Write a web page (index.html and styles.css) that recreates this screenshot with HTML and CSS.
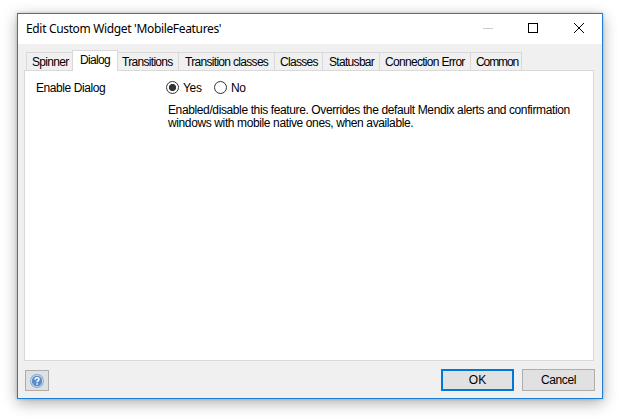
FILE: index.html
```
<!DOCTYPE html>
<html lang="en">
<head>
<meta charset="utf-8">
<title>Edit Custom Widget</title>
<link rel="stylesheet" href="styles.css">
</head>
<body>
<div class="window">
  <header class="titlebar">
    <h1 class="title">Edit Custom Widget 'MobileFeatures'</h1>
    <svg class="controls" width="103" height="12" viewBox="0 0 103 12" fill="none" shape-rendering="crispEdges">
      <path d="M1 6.500h10" stroke="#ccc"/>
      <rect x="46.500" y="1.500" width="9" height="9" stroke="#000"/>
      <path d="M92 1l10 10M102 1l-10 10" stroke="#000" shape-rendering="auto"/>
    </svg>
  </header>
  <nav class="tabs">
    <div class="tab spinner"><span>Spinner</span></div>
    <div class="tab active"><span>Dialog</span></div>
    <div class="tab transitions"><span>Transitions</span></div>
    <div class="tab transition-classes"><span>Transition classes</span></div>
    <div class="tab classes"><span>Classes</span></div>
    <div class="tab statusbar"><span>Statusbar</span></div>
    <div class="tab connection"><span>Connection Error</span></div>
    <div class="tab common"><span>Common</span></div>
  </nav>
  <main class="panel">
    <div class="label"><span>Enable Dialog</span></div>
    <div class="field">
      <div class="options">
        <i class="radio checked"></i><span class="yes">Yes</span>
        <i class="radio"></i><span class="no">No</span>
      </div>
      <p class="help"><span class="line-one">Enabled/disable this feature. Overrides the default Mendix alerts and confirmation</span><br><span class="line-two">windows with mobile native ones, when available.</span></p>
    </div>
  </main>
  <footer class="footer">
    <div class="help-button">
      <svg width="14" height="14" viewBox="0 0 14 14">
        <circle cx="7" cy="7" r="6.900" fill="#86a9d6"/>
        <circle cx="7" cy="7" r="6" fill="#cfe0f4"/>
        <circle cx="7" cy="7" r="5.200" fill="#5a8cc8"/>
        <path d="M5.100 5.700c0-2.500 3.900-2.400 3.900-.3C9 6.700 7.100 6.700 7.100 8.200M7.100 9.200v1.500" fill="none" stroke="#fff" stroke-width="1.500"/>
      </svg>
    </div>
    <div class="button primary"><span>OK</span></div>
    <div class="button cancel"><span>Cancel</span></div>
  </footer>
</div>
</body>
</html>
```
FILE: styles.css
```
* { box-sizing: border-box; }
body {
  margin: 0;
  padding: 13px 17px;
  height: 420px;
  overflow: hidden;
  background: #fff;
  color: #000;
  font: 12px/13px "Liberation Sans", Arial, sans-serif;
}
.window {
  width: 586px;
  height: 386px;
  border: 1px solid #1a7fd6;
  background: #f0f0f0;
  box-shadow: 0 4px 14px rgba(0, 0, 0, .32), 0 0 3px rgba(0, 0, 0, .2);
}
.titlebar {
  display: flex;
  justify-content: space-between;
  height: 30px;
  padding: 8px 17px 0 8px;
  background: #fff;
}
.title {
  margin: 0;
  font: 12px/14px "Noto Sans", sans-serif;
  letter-spacing: -.34px;
  white-space: nowrap;
}
.tabs {
  display: flex;
  align-items: flex-end;
  height: 27px;
  margin-bottom: -1px;
  padding-left: 8px;
}
.tab {
  height: 19px;
  border: 1px solid #d9d9d9;
  border-left: 0;
  padding: 3px 0 0 5px;
  white-space: nowrap;
  letter-spacing: -.69px;
}
.tab.active {
  width: 46px;
  height: 21px;
  border-left: 1px solid #d9d9d9;
  border-bottom: 0;
  background: #fff;
  padding-left: 7px;
  position: relative;
}
.spinner { width: 46px; border-left: 1px solid #d9d9d9; border-right: 0; }
.transitions { width: 61px; padding-left: 4px; }
.transition-classes { width: 96px; padding-left: 6px; }
.classes { width: 48px; }
.statusbar { width: 57px; padding-left: 6px; }
.connection { width: 91px; }
.common { width: 51px; letter-spacing: -1.1px; }
.panel {
  display: flex;
  width: 570px;
  height: 291px;
  margin-left: 6px;
  padding: 10px 0 0 11px;
  border: 1px solid #d9d9d9;
  background: #fff;
}
.label { width: 130px; letter-spacing: -.42px; padding-top: 1px; }
.options { display: flex; height: 13px; }
.radio {
  width: 13px;
  height: 13px;
  border: 1px solid #333;
  border-radius: 50%;
}
.checked { background: radial-gradient(circle, #333 3.2px, transparent 4px); }
.yes { width: 31px; margin-left: 4px; letter-spacing: -.3px; }
.no { margin-left: 4px; letter-spacing: -.3px; }
.yes, .no { padding-top: 1px; }
.help { margin: 10px 0 0 2px; white-space: nowrap; letter-spacing: -.38px; }
.footer { display: flex; padding: 8px 7px 0; }
.help-button {
  display: flex;
  align-items: center;
  justify-content: center;
  width: 24px;
  height: 21px;
  margin: 1px auto 0 0;
  border: 1px solid #adadad;
  background: #e1e1e1;
}
.button {
  display: flex;
  align-items: center;
  justify-content: center;
  width: 73px;
  height: 22px;
  margin-left: 8px;
  border: 1px solid #adadad;
  background: #e1e1e1;
}
.primary { border: 2px solid #0078d7; }
.cancel { letter-spacing: -.4px; }
```
